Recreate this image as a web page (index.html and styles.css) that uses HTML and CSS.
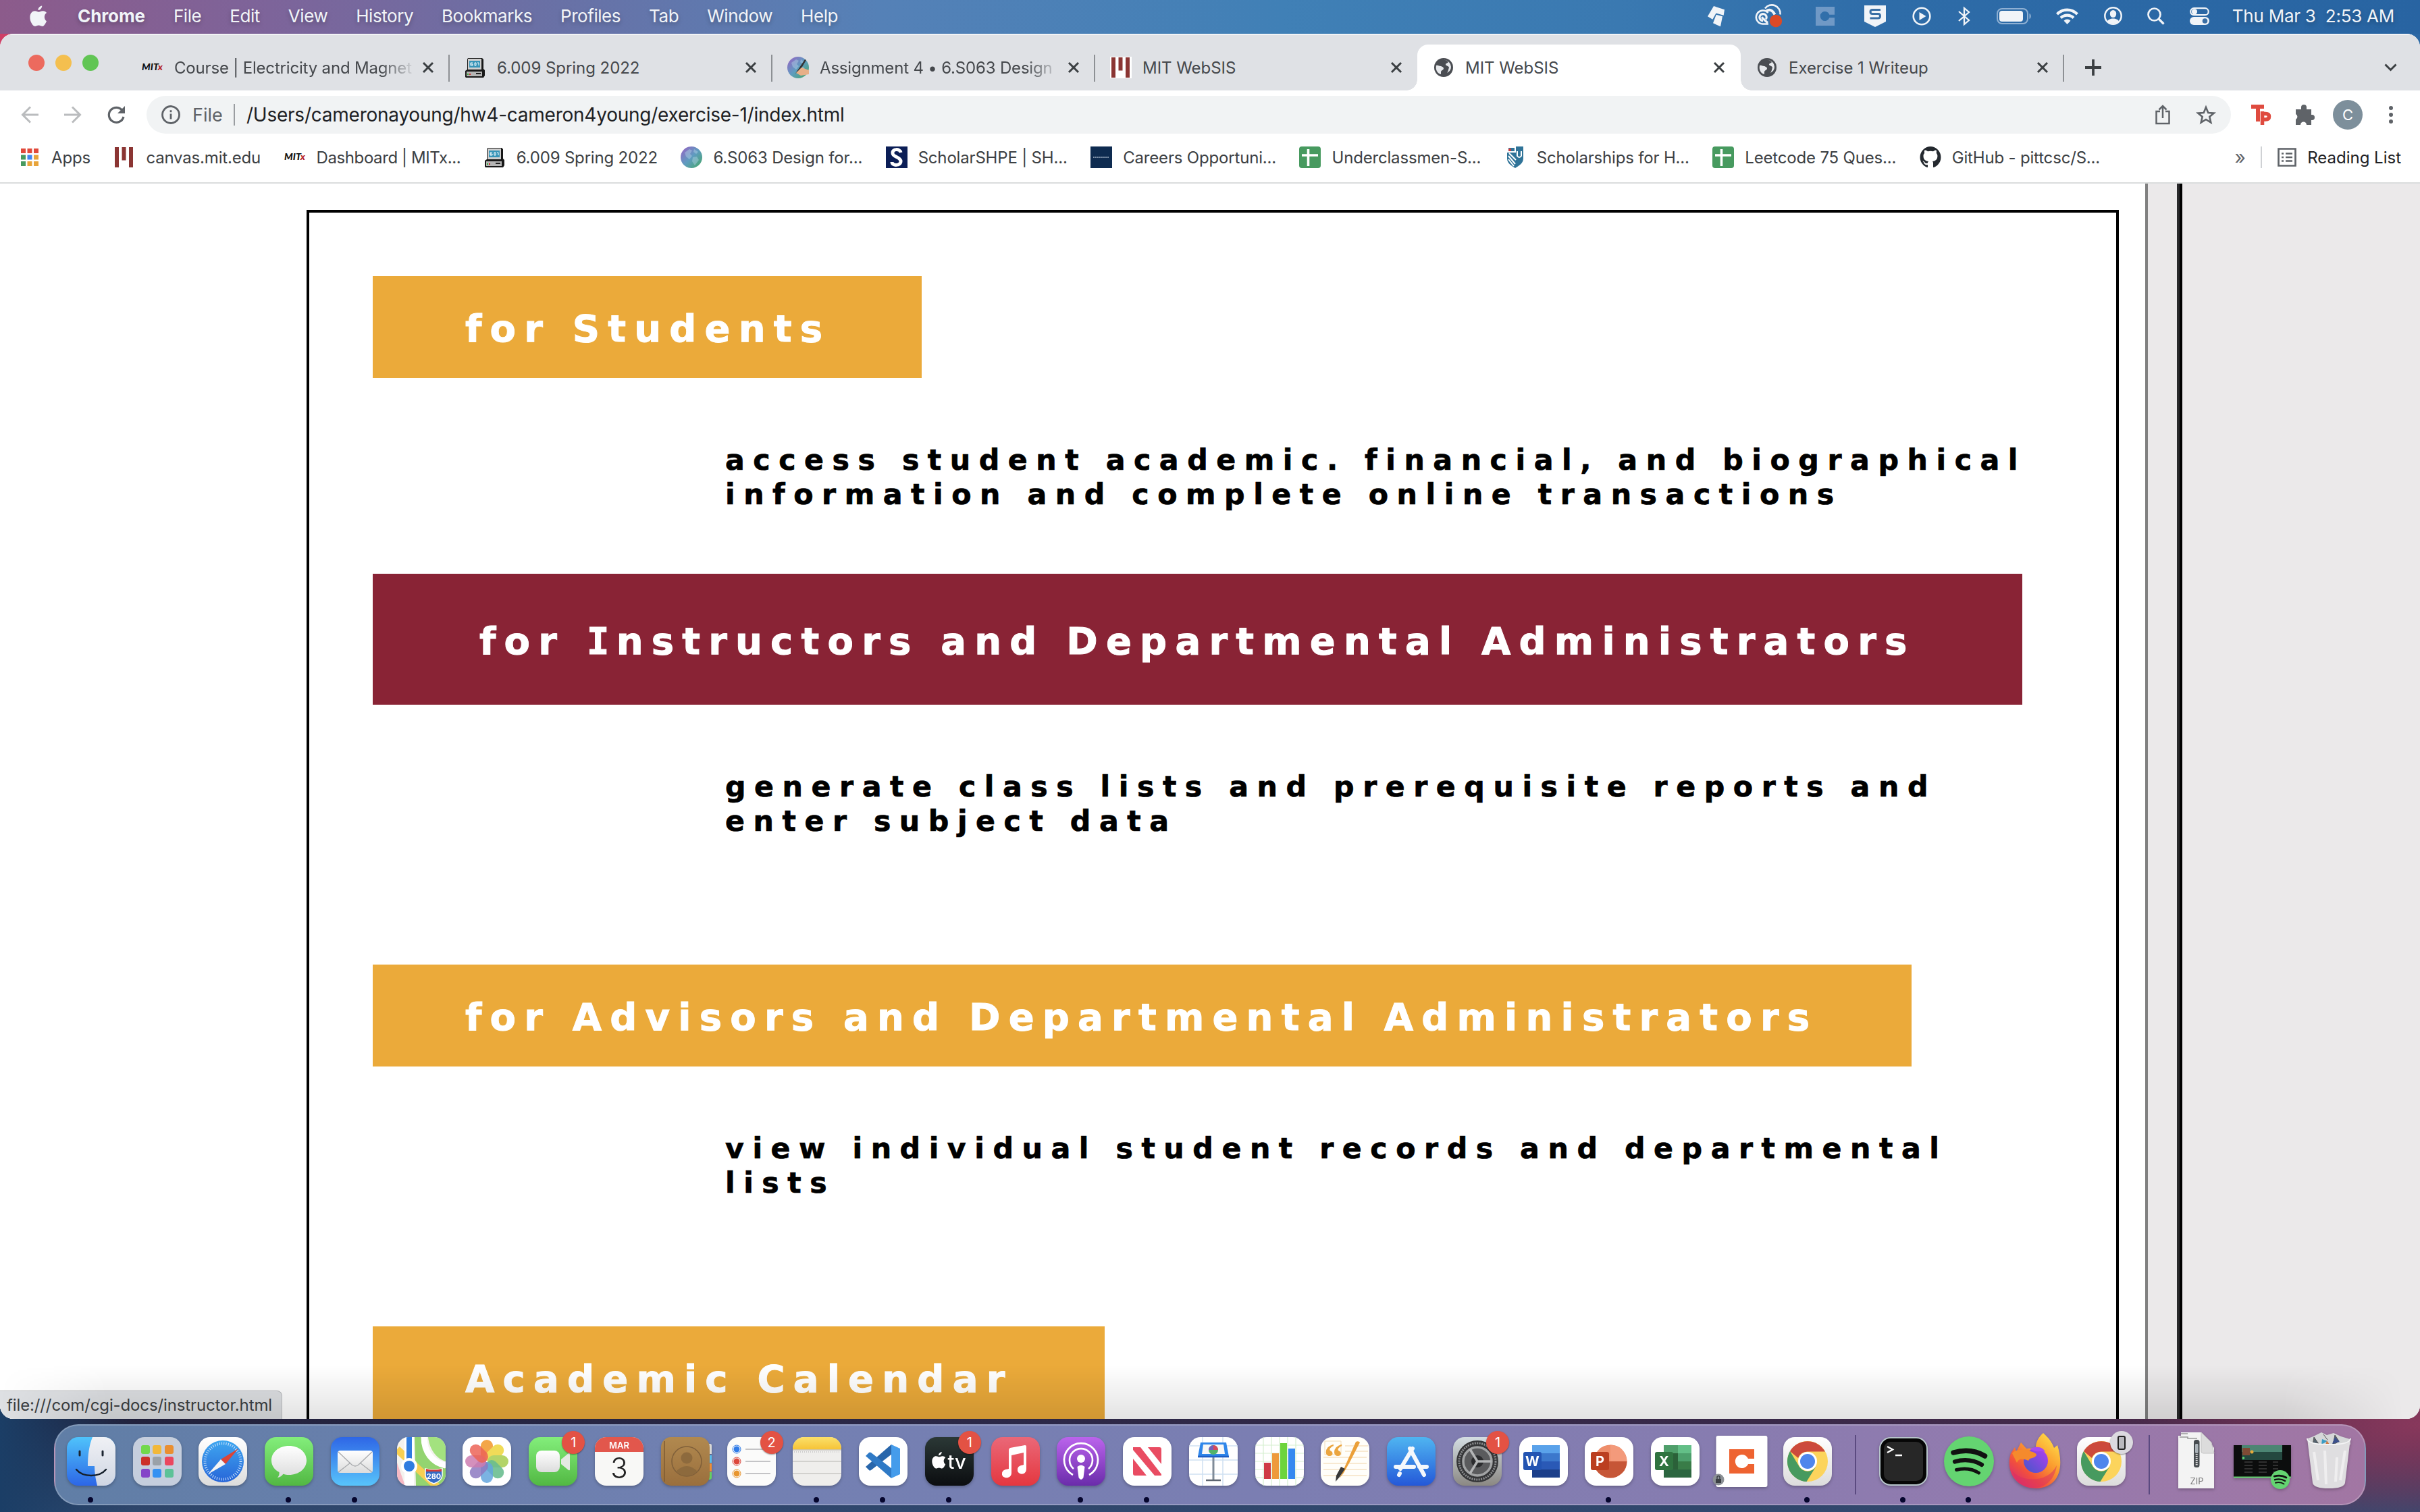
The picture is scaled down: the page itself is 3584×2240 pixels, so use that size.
FILE: index.html
```html
<!DOCTYPE html>
<html lang="en">
<head>
<meta charset="utf-8">
<title>MIT WebSIS</title>
<link rel="stylesheet" href="styles.css">
</head>
<body>
<svg width="0" height="0" class="defs">
  <defs>
    <linearGradient id="g-sky" x2="0" y2="1"><stop stop-color="#4fc3fb"/><stop offset="1" stop-color="#2c66e6"/></linearGradient>
    <linearGradient id="g-face" x2="0" y2="1"><stop stop-color="#f0f1f5"/><stop offset="1" stop-color="#cfd6e3"/></linearGradient>
    <linearGradient id="g-white" x2="0" y2="1"><stop stop-color="#fff"/><stop offset="1" stop-color="#dcdcdc"/></linearGradient>
    <linearGradient id="g-blue" x2="0" y2="1"><stop stop-color="#3fa7f0"/><stop offset="1" stop-color="#2765d8"/></linearGradient>
    <linearGradient id="g-green" x2="0" y2="1"><stop stop-color="#83ee7b"/><stop offset="1" stop-color="#52b843"/></linearGradient>
    <linearGradient id="g-mail" x2="0" y2="1"><stop stop-color="#2e66e6"/><stop offset="1" stop-color="#58c4fb"/></linearGradient>
    <linearGradient id="g-tan" x2="0" y2="1"><stop stop-color="#b1894f"/><stop offset="1" stop-color="#9a6f3d"/></linearGradient>
    <linearGradient id="g-yellow" x2="0" y2="1"><stop stop-color="#fbe06a"/><stop offset="1" stop-color="#f6c235"/></linearGradient>
    <linearGradient id="g-tv" x2="0" y2="1"><stop stop-color="#2b3836"/><stop offset="1" stop-color="#0b0d10"/></linearGradient>
    <linearGradient id="g-music" x2="0" y2="1"><stop stop-color="#ea6878"/><stop offset="1" stop-color="#e5373f"/></linearGradient>
    <linearGradient id="g-pod" x2="0" y2="1"><stop stop-color="#bb64ec"/><stop offset="1" stop-color="#6a2caa"/></linearGradient>
    <linearGradient id="g-store" x2="0" y2="1"><stop stop-color="#4fb5f1"/><stop offset="1" stop-color="#2458d8"/></linearGradient>
    <linearGradient id="g-gear" x2="0" y2="1"><stop stop-color="#d3dde2"/><stop offset="1" stop-color="#8b8883"/></linearGradient>
    <linearGradient id="g-fox" x1="1" x2="0.2" y2="1"><stop stop-color="#fff04f"/><stop offset=".45" stop-color="#fb9a2e"/><stop offset=".75" stop-color="#f2503c"/><stop offset="1" stop-color="#d72a74"/></linearGradient>
    <linearGradient id="g-foxball" x1="1" x2="0" y2="1"><stop stop-color="#b23ef0"/><stop offset="1" stop-color="#4457c8"/></linearGradient>
    <linearGradient id="g-globe" x2="1" y2="1"><stop stop-color="#9a5fc4"/><stop offset=".5" stop-color="#5f9cc0"/><stop offset="1" stop-color="#45a865"/></linearGradient>
    <symbol id="apple" viewBox="0 0 26 32"><path d="M18.2 0.5c.3 2.900-2.600 6.700-5.700 6.500C12.100 4 15.200.8 18.200.5zM25 23.200c-1.300 3.200-3.600 7.600-6.300 7.700-2.100.1-2.900-1.300-5.400-1.300s-3.300 1.300-5.300 1.300C4.500 31 0 23.500.4 17c.3-5.400 3.700-8.700 7.300-8.700 2.300 0 4 1.500 5.700 1.500 1.500 0 3.500-1.700 6.500-1.600 1.900.1 3.900 1 5.100 2.800-4.400 2.800-3.900 9.900 0 12.200z"/></symbol>
    <symbol id="close" viewBox="0 0 18 18"><path d="M2 2l14 14M16 2L2 16" stroke="#3c4043" stroke-width="3" fill="none"/></symbol>
    <symbol id="computer" viewBox="0 0 32 32"><path d="M5 2h21l2 2v14l2 2v8l-2 3H2l-1-1v-9l3-2V4z" fill="#181818"/><path d="M5 3h20v16H5z" fill="#cfcfcf"/><path d="M7 6h16v10H7z" fill="#3794b8"/><path d="M3 22h23v7H3z" fill="#b5b5b5"/><path d="M17 25h7" stroke="#222" stroke-width="2"/><path d="M4 26h2" stroke="#3a3" stroke-width="2"/><path d="M7 26h2" stroke="#c22" stroke-width="2"/><path d="M9 9h3M9 9v4h3v-2h-3M15 9h2v4h-2zM19 9h2v4" stroke="#fff" fill="none"/></symbol>
    <symbol id="bars" viewBox="0 0 28 30"><path d="M0 0h6v30H0zM10.500 0h6v19.500h-6zM21 0h6v30h-6z" fill="#8b3533"/></symbol>
    <symbol id="earth" viewBox="0 0 32 32"><circle cx="16" cy="16" r="16" fill="url(#g-globe)"/><path d="M6 9l7-5 4 2-3 5 3 3-4 5-5-4zM18 16l6-1 3 5-6 8-4-6zM20 4l6 4-3 3-4-3z" fill="#bcd9ea" opacity=".4"/></symbol>
    <symbol id="world" viewBox="0 0 28 28"><circle cx="14" cy="14" r="14" fill="#4a4d52"/><path d="M3 11c3-1 4 1 7 1 2 1 4 1 4 4-1 2-3 2-4 4v4C5.500 23 2.700 19 2.700 14zM12 3c4-1 7 1 9 3-1 2-4 1-4 4 1 2 4 1 5 4-1 3-1 5-3 8 4-2 6-5 6-9l-1-4c-2-4-7-7-12-6z" fill="#e7e9ec"/></symbol>
    <symbol id="sheet" viewBox="0 0 32 32"><rect width="32" height="32" rx="4" fill="#479a5f"/><path d="M4 13h24M13.500 4v25" stroke="#fff" stroke-width="3.600"/></symbol>
    <symbol id="chrome-app" viewBox="0 0 72 72"><rect width="72" height="72" rx="17" fill="url(#g-white)"/><circle cx="36" cy="36" r="30" fill="#fcd45c"/><path d="M10 21A30 30 0 0 1 62 21.500H36A14.500 14.500 0 0 0 22 31z" fill="#cc4a3c"/><path d="M10 21a30 30 0 0 0 24.500 45L48.500 43.500A14.500 14.500 0 0 1 23.500 43.500z" fill="#479a5f"/><circle cx="36" cy="36" r="14" fill="#fff"/><circle cx="36" cy="36" r="11" fill="#4f86ec"/></symbol>
    <symbol id="spotify-mark" viewBox="0 0 74 74"><circle cx="37" cy="37" r="37" fill="#64d471"/><g fill="none" stroke="#111" stroke-linecap="round"><path d="M14 24c16-4.500 33-3 46.500 5" stroke-width="7.500"/><path d="M16 37.500c14-4 28-2.500 40 4.500" stroke-width="6.200"/><path d="M18.500 49.500c12-3 23-1.800 33 4.500" stroke-width="5"/></g></symbol>
  </defs>
</svg>

<header class="menubar">
  <nav class="menus">
    <svg class="apple"><use href="#apple"/></svg>
    <b>Chrome</b><span>File</span><span>Edit</span><span>View</span><span>History</span><span>Bookmarks</span><span>Profiles</span><span>Tab</span><span>Window</span><span>Help</span>
  </nav>
  <div class="tray">
    <svg width="26" height="30" class="t1"><path d="M9 0l16 5.300-1.300 8.400-11.200-3.200-5.200 9.200L0 15.300zM12.700 12.700l9.300 2.600-3 15-11-5z" fill="#f1f4f8"/></svg>
    <svg width="44" height="32" class="t2"><g fill="none" stroke="#f1f4f8"><path d="M20 27.500h-8.500a10 10 0 1 1 8-16.500" stroke-width="2.600"/><path d="M15 4.500a12.500 12.500 0 0 1 22.500 9" stroke-width="2.600"/><path d="M19 26l-9-8.500M16.500 20.500a5.200 5.200 0 1 0-4.500 2.500" stroke-width="3.200"/><path d="M17 8.500q7-5 12.500 5" stroke-width="4"/></g><circle cx="31" cy="23" r="9.200" fill="#dc4a26"/></svg>
    <svg width="28" height="28" class="t3"><path d="M0 0h28v11.700h-7.700a7 7 0 1 0 0 4.600H28V28H0z" fill="#7099c6"/></svg>
    <svg width="32" height="32" class="t4"><path d="M0 0h32v24l-16 8L0 24z" fill="#f1f4f8"/><path d="M24 6.500H12q-3 0-3 3t3 3h8.500q3 0 3 3.200t-3 3.200H8.500" fill="none" stroke="#3a6fa5" stroke-width="3"/></svg>
    <svg width="28" height="28" class="t5"><circle cx="14" cy="14" r="12.300" fill="none" stroke="#f1f4f8" stroke-width="2.600"/><path d="M10.500 8l10 6-10 6z" fill="#f1f4f8"/></svg>
    <svg width="18" height="28" class="t6"><path d="M1 7l15 13-7 6V2l7 6L1 21" fill="none" stroke="#f1f4f8" stroke-width="2.300"/></svg>
    <svg width="52" height="24" class="t7"><rect x="1" y="1" width="45" height="22" rx="7" fill="none" stroke="#8fb0d3" stroke-width="2"/><rect x="4" y="4" width="35" height="16" rx="4" fill="#f1f4f8"/><path d="M48.500 8c3 1 3 7 0 8z" fill="#8fb0d3"/></svg>
    <svg width="33" height="24" class="t8"><g fill="none" stroke="#f1f4f8" stroke-width="4.200"><path d="M1.500 9a21 21 0 0 1 30 0"/><path d="M7 14.500a13.500 13.500 0 0 1 19 0"/></g><path d="M16.500 24l-5-5.300a7 7 0 0 1 10 0z" fill="#f1f4f8"/></svg>
    <svg width="27" height="27" class="t9"><circle cx="13.500" cy="13.500" r="12.200" fill="none" stroke="#f1f4f8" stroke-width="2.500"/><ellipse cx="13.500" cy="10.500" rx="4.700" ry="5.500" fill="#f1f4f8"/><path d="M5 22c1-6 16-6 17 0-4 4-13 4-17 0z" fill="#f1f4f8"/></svg>
    <svg width="26" height="26" class="t10"><circle cx="10.500" cy="10.500" r="9" fill="none" stroke="#f1f4f8" stroke-width="2.700"/><path d="M17 17l7.500 7.500" stroke="#f1f4f8" stroke-width="3.200"/></svg>
    <svg width="29" height="26" class="t11"><rect x="1.200" y="1.200" width="26.500" height="10" rx="5" fill="none" stroke="#f1f4f8" stroke-width="2.200"/><circle cx="7" cy="6.200" r="4" fill="#f1f4f8"/><rect y="14" width="29" height="12" rx="6" fill="#f1f4f8"/><circle cx="22.500" cy="20" r="3.800" fill="#3a6fa5"/></svg>
    <span class="clock">Thu Mar 3&nbsp; 2:53 AM</span>
  </div>
</header>

<main class="window">
  <div class="tabstrip">
    <div class="lights"><i class="red"></i><i class="amber"></i><i class="green"></i></div>
    <div class="tab"><svg class="fav"><text x="0" y="20" class="mitx" textLength="31" lengthAdjust="spacingAndGlyphs">MIT<tspan fill="#b3252c">x</tspan></text></svg><span class="title fade">Course | Electricity and Magnet</span><svg class="x"><use href="#close"/></svg></div>
    <div class="tab"><svg class="fav"><use href="#computer"/></svg><span class="title">6.009 Spring 2022</span><svg class="x"><use href="#close"/></svg></div>
    <div class="tab"><svg class="fav"><use href="#earth"/><path d="M12 25L26 4l2 1-9 15z" fill="#333"/><path d="M13 24l8-8 11 4v6l-12 2z" fill="#e7b088"/></svg><span class="title fade">Assignment 4 • 6.S063 Design</span><svg class="x"><use href="#close"/></svg></div>
    <div class="tab last-before"><svg class="fav"><path d="M0 0h32v32H0z" fill="#fff"/><use href="#bars" x="2" y="1" width="28" height="30"/></svg><span class="title">MIT WebSIS</span><svg class="x"><use href="#close"/></svg></div>
    <div class="tab active"><svg class="fav"><use href="#world" x="2" y="2" width="28" height="28"/></svg><span class="title">MIT WebSIS</span><svg class="x"><use href="#close"/></svg></div>
    <div class="tab"><svg class="fav"><use href="#world" x="2" y="2" width="28" height="28"/></svg><span class="title">Exercise 1 Writeup</span><svg class="x"><use href="#close"/></svg></div>
    <svg class="plus" width="24" height="24"><path d="M12 0v24M0 12h24" stroke="#3c4043" stroke-width="3.800"/></svg>
    <svg class="chevron" width="19" height="12"><path d="M1.500 1.500l8 8 8-8" stroke="#3c4043" stroke-width="3" fill="none"/></svg>
  </div>

  <div class="toolbar">
    <svg width="26" height="26"><path d="M26 13H3M14 1.500L2.500 13 14 24.500" stroke="#babcbe" stroke-width="3" fill="none"/></svg>
    <svg width="26" height="26"><path d="M0 13h23M12 1.500L23.500 13 12 24.500" stroke="#babcbe" stroke-width="3" fill="none"/></svg>
    <svg width="26" height="26"><path d="M22 6.500A11 11 0 1 0 24 16" stroke="#5f6368" stroke-width="3.200" fill="none"/><path d="M26 0v11H15z" fill="#5f6368"/></svg>
    <div class="omnibox">
      <svg width="28" height="28"><circle cx="14" cy="14" r="12.500" stroke="#5f6368" stroke-width="2.800" fill="none"/><path d="M14 12.500v8M14 7.300v3" stroke="#5f6368" stroke-width="2.800"/></svg>
      <span class="scheme">File</span>
      <span class="url">/Users/cameronayoung/hw4-cameron4young/exercise-1/index.html</span>
      <svg class="share" width="22" height="30"><path d="M7 10H1.500v18h19V10H15M11 20V2M5.500 7.500L11 2l5.500 5.500" stroke="#5f6368" stroke-width="2.500" fill="none"/></svg>
      <svg class="star" width="28" height="28"><path d="M14 3l3.300 8 8.500.6-6.500 5.500 2 8.400L14 21l-7.300 4.500 2-8.400-6.500-5.500 8.500-.6z" stroke="#5f6368" stroke-width="2.600" fill="none"/></svg>
    </div>
    <svg class="tp" width="31" height="30"><path d="M0 0h19v6h-6v19H7V6H0z" fill="#df4b3f"/><path d="M16.500 10v20M16.500 13.500h5q5 0 5 4.200t-5 4.200h-4" stroke="#df4b3f" stroke-width="5.500" fill="none"/></svg>
    <svg class="puzzle" width="29" height="30"><path d="M1 7h8V4a4 4 0 0 1 8 0v3h7v8h1a4 4 0 0 1 0 8h-1v7h-7a4.500 4.500 0 0 0-9 0H1v-8a4.500 4.500 0 0 0 0-8z" fill="#5f6368"/></svg>
    <div class="avatar">C</div>
    <svg class="dots" width="6" height="26"><circle cx="3" cy="3" r="3"/><circle cx="3" cy="13" r="3"/><circle cx="3" cy="23" r="3"/></svg>
  </div>

  <div class="bookmarks">
    <a><svg class="fav apps"><path d="M3 3h7v7H3zM12.500 3h7v7h-7z M22 3h7v7h-7z" fill="#e04a3b"/><path d="M3 12.500h7v7H3zM3 22h7v7H3z" fill="#479a5f"/><path d="M12.500 12.500h7v7h-7z" fill="#4285f0"/><path d="M22 12.500h7v7h-7zM12.500 22h7v7h-7zM22 22h7v7h-7z" fill="#e8a43a"/></svg>Apps</a>
    <a><svg class="fav"><use href="#bars" x="2" y="1" width="28" height="30"/></svg>canvas.mit.edu</a>
    <a class="tight"><svg class="fav"><text x="0" y="20" class="mitx" textLength="31" lengthAdjust="spacingAndGlyphs">MIT<tspan fill="#b3252c">x</tspan></text></svg>Dashboard | MITx...</a>
    <a><svg class="fav"><use href="#computer"/></svg>6.009 Spring 2022</a>
    <a><svg class="fav"><use href="#earth"/></svg>6.S063 Design for...</a>
    <a><svg class="fav"><path d="M0 0h32v32H0z" fill="#0b1e56"/><path d="M22 9c-1-6-13-6-12 1 0 6 12 5 12 12 0 7-13 7-13 1" fill="none" stroke="#fff" stroke-width="5"/></svg>ScholarSHPE | SH...</a>
    <a><svg class="fav"><path d="M0 0h32v32H0z" fill="#0e2b50"/><path d="M4 16h24" stroke="#8496ad" stroke-width="2" stroke-dasharray="2 1"/></svg>Careers Opportuni...</a>
    <a><svg class="fav"><use href="#sheet"/></svg>Underclassmen-S...</a>
    <a><svg class="fav"><path d="M4 0h24v18c0 7-7 11-12 14C11 29 4 25 4 18z" fill="#2f7398"/><path d="M5 1h11v7H5zM6 14l10 12M6 19l8 10M7 10l10 10M19 7v7q3 4 6 0V7" stroke="#fff" stroke-width="2" fill="none"/><circle cx="8" cy="5" r="2" fill="#d33"/></svg>Scholarships for H...</a>
    <a><svg class="fav"><use href="#sheet"/></svg>Leetcode 75 Ques...</a>
    <a><svg class="fav"><path d="M16 0a16 16 0 0 0-5 31c1 0 1-.5 1-1v-3c-5 1-5.500-2.500-5.500-2.500C5.500 22 4 21.500 4 21.500c2-.5 3 1.500 3.500 2 1.500 2 3.500 1.500 4.500 1 0-1 .5-2 1-2.500-4-.5-7.500-2-7.500-8 0-2 .7-3 1.700-4.200-.2-.8-.6-2 .2-4.300 0 0 1.500-.4 4.600 1.700a16 16 0 0 1 8 0c3-2 4.500-1.700 4.500-1.700.8 2.300.4 3.500.2 4.300 1 1.200 1.700 2.500 1.700 4.200 0 6-3.500 7.500-7.400 8 .6.500 1 1.500 1 3v5c0 .5 0 1 1 1A16 16 0 0 0 16 0z" fill="#24292f"/></svg>GitHub - pittcsc/S...</a>
    <span class="more">»</span>
    <a class="reading"><svg width="28" height="28"><path d="M1.500 1.500h25v25h-25zM6 8.500h3M6 14h3M6 19.500h3M12 8.500h10M12 14h10M12 19.500h10" stroke="#5f6368" stroke-width="2.700" fill="none"/></svg>Reading List</a>
  </div>

  <div class="page">
    <section class="content">
      <div class="panel">
        <h2 class="students">for Students</h2>
        <p>access student academic. financial, and biographical<br>information and complete online transactions</p>
        <h2 class="instructors">for <span class="slab">I</span>nstructors and Departmental Administrators</h2>
        <p class="roomy">generate class lists and prerequisite reports and<br>enter subject data</p>
        <h2 class="advisors">for Advisors and Departmental Administrators</h2>
        <p class="roomy">view individual student records and departmental<br>lists</p>
        <h2 class="calendar">Academic Calendar</h2>
      </div>
    </section>
    <div class="rail"></div>
    <div class="status">file:///com/cgi-docs/instructor.html</div>
  </div>
</main>

<footer class="dock">
  <div class="app on"><svg viewBox="0 0 72 72"><clipPath id="sq"><rect width="72" height="72" rx="17"/></clipPath><g clip-path="url(#sq)"><path d="M0 0h72v72H0z" fill="url(#g-sky)"/><path d="M38 0h34v72H45c-2-8-4-18-4-29H31C31 27 33 12 38 0z" fill="url(#g-face)"/></g><path d="M19 21v6M53 21v6" stroke="#1c2430" stroke-width="3" stroke-linecap="round"/><path d="M14 48c10 12 34 12 44 0" fill="none" stroke="#16202c" stroke-width="2.500" stroke-linecap="round"/></svg></div>
  <div class="app"><svg viewBox="0 0 72 72"><rect width="72" height="72" rx="17" fill="#c5cedd"/><g><rect x="12" y="12" width="13" height="13" rx="3" fill="#72d84c"/><rect x="29" y="12" width="13" height="13" rx="3" fill="#f2b83a"/><rect x="47" y="12" width="13" height="13" rx="3" fill="#ea8f31"/><rect x="12" y="29" width="13" height="13" rx="3" fill="#cc3029"/><rect x="29" y="29" width="13" height="13" rx="3" fill="#9aa1a8"/><rect x="47" y="29" width="13" height="13" rx="3" fill="#ea475f"/><rect x="12" y="47" width="13" height="13" rx="3" fill="#8545c8"/><rect x="29" y="47" width="13" height="13" rx="3" fill="#3592f2"/><rect x="47" y="47" width="13" height="13" rx="3" fill="#5cc298"/></g></svg></div>
  <div class="app"><svg viewBox="0 0 72 72"><rect width="72" height="72" rx="17" fill="url(#g-white)"/><circle cx="36" cy="36" r="31" fill="url(#g-blue)"/><circle cx="36" cy="36" r="26.500" fill="none" stroke="#cfe4fb" stroke-width="4" stroke-dasharray="1 2.300"/><path d="M59 17L40 40l-7-7z" fill="#dc4437"/><path d="M14 55l19-22 7 7z" fill="#f4f4f4"/></svg></div>
  <div class="app on"><svg viewBox="0 0 72 72"><rect width="72" height="72" rx="17" fill="url(#g-green)"/><path d="M36 13c15 0 26 9.500 26 21.500S51 56 36 56c-3 0-6-.4-8.600-1.200C25 58 22 60 19 60c2-2 3-5 2.500-8C14 48 10 42 10 34.500 10 22.500 21 13 36 13z" fill="url(#g-white)"/></svg></div>
  <div class="app on"><svg viewBox="0 0 72 72"><rect width="72" height="72" rx="17" fill="url(#g-mail)"/><rect x="10" y="20" width="52" height="33" rx="4" fill="url(#g-white)"/><path d="M11 22l20 19q5 4 10 0l20-19M11 52l18-14M61 52L43 38" fill="none" stroke="#a7a9ac" stroke-width="1.300"/></svg></div>
  <div class="app"><svg viewBox="0 0 72 72"><g clip-path="url(#sq)"><path d="M0 0h72v72H0z" fill="#f4f2ee"/><path d="M46 0h26v36C58 32 48 18 46 0z" fill="#a3e27f"/><path d="M26 0h10c1 22 12 42 36 46v26H28z" fill="#93d470"/><path d="M40 0c0 22 12 38 32 42" fill="none" stroke="#fff" stroke-width="9"/><path d="M0 18l60 56" stroke="#f7cf52" stroke-width="11"/><path d="M0 38l12 34H0z" fill="#f5b9c4"/><path d="M18 0v40M18 52v20" stroke="#fff" stroke-width="14"/><path d="M18 0v36" stroke="#2f7ce0" stroke-width="8"/></g><circle cx="18" cy="43" r="12" fill="#fff"/><circle cx="18" cy="43" r="8" fill="#2f7ce0"/><path d="M42 47q12 3 25 0v10q-1 8-12.500 12Q43 65 42 57z" fill="#356cc4" stroke="#fff" stroke-width="1.500"/><path d="M43 47q11 3 23 0v4H43z" fill="#d23c37"/><text x="54.500" y="61.500" class="route">280</text></svg></div>
  <div class="app"><svg viewBox="0 0 72 72"><rect width="72" height="72" rx="17" fill="#fff"/><g transform="translate(36 36)" opacity=".88"><rect x="-9" y="-32" width="18" height="31" rx="9" fill="#f29a31"/><rect x="-9" y="-32" width="18" height="31" rx="9" fill="#efd742" transform="rotate(45)"/><rect x="-9" y="-32" width="18" height="31" rx="9" fill="#a9cf55" transform="rotate(90)"/><rect x="-9" y="-32" width="18" height="31" rx="9" fill="#55b481" transform="rotate(135)" opacity=".9"/><rect x="-9" y="-32" width="18" height="31" rx="9" fill="#4f9ad8" transform="rotate(180)" opacity=".85"/><rect x="-9" y="-32" width="18" height="31" rx="9" fill="#7e69b8" transform="rotate(225)" opacity=".85"/><rect x="-9" y="-32" width="18" height="31" rx="9" fill="#c66ba6" transform="rotate(270)" opacity=".85"/><rect x="-9" y="-32" width="18" height="31" rx="9" fill="#ea4f3f" transform="rotate(315)" opacity=".85"/></g></svg></div>
  <div class="app"><svg viewBox="0 0 72 72"><rect width="72" height="72" rx="17" fill="url(#g-green)"/><rect x="11" y="20" width="35" height="32" rx="8" fill="url(#g-white)"/><path d="M48 33l11-9q2-1 2 1v23q0 2-2 1l-11-9z" fill="#e4e9e2"/></svg><em class="badge">1</em></div>
  <div class="app"><svg viewBox="0 0 72 72"><rect width="72" height="72" rx="17" fill="#f8f8f6"/><path d="M0 22v-5A17 17 0 0 1 17 0h38a17 17 0 0 1 17 17v5z" fill="#e2574c"/><text x="36" y="16.500" class="cal-month">MAR</text><text x="36" y="61" class="cal-day">3</text></svg></div>
  <div class="app"><svg viewBox="0 0 72 72"><path d="M68 10h5q2 0 2 3v12h-7z" fill="#d8d8d6"/><path d="M68 27h7v11h-7z" fill="#58bbea"/><path d="M68 39h7v12h-7z" fill="#ef8d34"/><path d="M68 52h7v8q0 3-3 3h-4z" fill="#65cf62"/><rect width="72" height="72" rx="15" fill="url(#g-tan)"/><path d="M5 6v60" stroke="#7e5b33" stroke-width="1.500"/><circle cx="38" cy="36" r="22" fill="none" stroke="#80603a" stroke-width="1.600"/><circle cx="38" cy="31" r="8.500" fill="#8d6a3d"/><path d="M22 51q16-16 32 0-16 13-32 0z" fill="#8d6a3d"/></svg></div>
  <div class="app"><svg viewBox="0 0 72 72"><rect width="72" height="72" rx="17" fill="#fbfbfa"/><path d="M27 18h37M27 36h37M27 54h37" stroke="#c4c4c6" stroke-width="1.800"/><circle cx="14" cy="18" r="5" fill="#2f7be8" stroke="#fff"/><circle cx="14" cy="18" r="6" fill="none" stroke="#2f7be8"/><circle cx="14" cy="36" r="4.500" fill="#dd473b"/><circle cx="14" cy="36" r="6" fill="none" stroke="#dd473b"/><circle cx="14" cy="54" r="4.500" fill="#e8962f"/><circle cx="14" cy="54" r="6" fill="none" stroke="#e8962f"/></svg><em class="badge">2</em></div>
  <div class="app on"><svg viewBox="0 0 72 72"><rect width="72" height="72" rx="17" fill="#efeeec"/><path d="M0 19v-2A17 17 0 0 1 17 0h38a17 17 0 0 1 17 17v2z" fill="url(#g-yellow)"/><path d="M0 19h72M0 36h72M0 54h72" stroke="#c9c7c4" stroke-width="1.300"/><path d="M2 22h68" stroke="#aaa" stroke-dasharray="1 2"/></svg></div>
  <div class="app on"><svg viewBox="0 0 72 72"><rect width="72" height="72" rx="17" fill="#fff"/><path d="M48 11L10 44l5 5q1 1 3 0l31-24z" fill="#2866ab"/><path d="M48 61L10 28l5-5q1-1 3 0l31 24z" fill="#2f7ac6"/><path d="M48 11l13 6v38l-13 6z" fill="#459ceb"/></svg></div>
  <div class="app on"><svg viewBox="0 0 72 72"><rect width="72" height="72" rx="17" fill="url(#g-tv)"/><use href="#apple" x="10" y="21" width="21" height="27" fill="#fff"/><text x="47" y="47" class="tv">tv</text></svg><em class="badge">1</em></div>
  <div class="app"><svg viewBox="0 0 72 72"><rect width="72" height="72" rx="17" fill="url(#g-music)"/><path d="M26 19q0-2 2-3l22-4q2 0 2 2v33c0 11-14 9-13 1 0-5 5-6 9-7V23l-18 4v26c0 10-15 9-14 1 0-5 5-6 10-7z" fill="#fff"/></svg></div>
  <div class="app on"><svg viewBox="0 0 72 72"><rect width="72" height="72" rx="17" fill="url(#g-pod)"/><g fill="none" stroke="#fff" stroke-width="2.700"><path d="M24 56a25 25 0 1 1 24 0"/><path d="M25 47a17 17 0 1 1 22 0"/></g><circle cx="36" cy="32" r="6" fill="#fff"/><path d="M30.500 44q5.500-5 11 0l-2 16q-3.500 6-7 0z" fill="#fff"/></svg></div>
  <div class="app on"><svg viewBox="0 0 72 72"><rect width="72" height="72" rx="17" fill="#fff"/><path d="M15 15h11l31 40v2H47L15 19z" fill="#e94c62"/><path d="M37 15h17q3 0 3 3v22zM15 32l20 25H18q-3 0-3-3z" fill="#e94c62"/></svg></div>
  <div class="app"><svg viewBox="0 0 72 72"><rect width="72" height="72" rx="17" fill="#fff"/><path d="M0 13h72M0 34h72M0 55h72M20 0v72M50 0v72" stroke="#cfe1f2" stroke-width="1.500"/><path d="M36 28v36" stroke="#7f8b98" stroke-width="3"/><path d="M17 8h38l4 21H13z" fill="#2f86ea"/><path d="M21 11h30l2 14H19z" fill="#f7f7f7"/><circle cx="36" cy="19" r="7" fill="#52b36a"/><path d="M36 19v-7a7 7 0 0 1 7 7z" fill="#d9485c"/><path d="M36 19h-7a7 7 0 0 1 7-7z" fill="#7660b8"/><path d="M13 29h46" stroke="#1d5dc4" stroke-width="2.500"/><path d="M25 64h22" stroke="#5e6570" stroke-width="2.500"/></svg></div>
  <div class="app"><svg viewBox="0 0 72 72"><rect width="72" height="72" rx="17" fill="#fff"/><path d="M0 12h72M0 24h72M0 36h72M0 48h72M0 60h72M12 0v72M24 0v72M36 0v72M48 0v72M60 0v72" stroke="#d5efd0" stroke-width="1.200"/><path d="M13 38h10v24H13z" fill="#cf3a45"/><path d="M25 24h10v38H25z" fill="#ee9a3b"/><path d="M37 9h10v53H37z" fill="#6dd43c"/><path d="M49 17h10v45H49z" fill="#3689f0"/></svg></div>
  <div class="app"><svg viewBox="0 0 72 72"><rect width="72" height="72" rx="17" fill="#fffefa"/><path d="M4 30h64M4 39h64M4 48h64M4 57h64M36 13h34M36 21h34" stroke="#f6e2c4" stroke-width="1.300"/><path d="M6 6h24v20H6z" fill="none" stroke="#f0dcb8"/><text x="5" y="49" class="quote">“</text><path d="M52 7q4-2 6 1L43 37l-9 16-6 8z" fill="#eba03a"/><path d="M30 44l6 3-8 12-6 7 1-9z" fill="#383838"/></svg></div>
  <div class="app"><svg viewBox="0 0 72 72"><rect width="72" height="72" rx="17" fill="url(#g-store)"/><g stroke="#f4f8fc" stroke-width="6" stroke-linecap="round"><path d="M38 17L20 47M34 17l21 39M13 44h27M48 44h11M19 54l-1 2"/></g></svg></div>
  <div class="app"><svg viewBox="0 0 72 72"><rect width="72" height="72" rx="17" fill="url(#g-gear)"/><circle cx="36" cy="36" r="31" fill="#353638"/><circle cx="36" cy="36" r="27" fill="none" stroke="#8c8e90" stroke-width="3" stroke-dasharray="2 1.500"/><circle cx="36" cy="36" r="21" fill="#5a5b5d" stroke="#a1a3a4" stroke-width="3.500"/><circle cx="36" cy="36" r="9" fill="#2b2c2e"/><path d="M36 36h21M36 36L25 18M36 36L25 54" stroke="#b3b5b6" stroke-width="3.500"/></svg><em class="badge">1</em></div>
  <div class="app"><svg viewBox="0 0 72 72"><rect width="72" height="72" rx="17" fill="#fff"/><path d="M19 12h41v12H19z" fill="#5aa2ea"/><path d="M19 24h41v12H19z" fill="#3c78cc"/><path d="M19 36h41v12H19z" fill="#2a59b6"/><path d="M19 48h41v12H19z" fill="#1c3f8a"/><rect x="6" y="22" width="27" height="27" rx="3" fill="#2354b2"/><text x="19.500" y="42.500" class="office">W</text></svg></div>
  <div class="app on"><svg viewBox="0 0 72 72"><rect width="72" height="72" rx="17" fill="#fff"/><circle cx="38" cy="36" r="24.500" fill="#ee8e6b"/><path d="M38 11.500A24.500 24.500 0 0 1 62.500 36H38z" fill="#f39a7b"/><path d="M13.500 36a24.500 24.500 0 0 0 49 0z" fill="#c65637"/><rect x="9" y="22" width="27" height="27" rx="3" fill="#bb3f20"/><text x="22.500" y="42.500" class="office">P</text></svg></div>
  <div class="app"><svg viewBox="0 0 72 72"><rect width="72" height="72" rx="17" fill="#fff"/><path d="M19 12h41v48H19z" fill="#2c6640"/><path d="M19 12h21v12H19z" fill="#4f9f6b"/><path d="M40 12h20v12H40z" fill="#63bf87"/><path d="M40 24h20v12H40z" fill="#4c9f6b"/><path d="M19 24h21v24H19z" fill="#2b6139"/><path d="M40 36h20v12H40z" fill="#397c48"/><rect x="6" y="22" width="27" height="27" rx="3" fill="#2f7340"/><text x="19.500" y="42.500" class="office">X</text></svg></div>
  <div class="app"><svg viewBox="0 0 72 72"><rect x="-1.500" y="-2" width="76" height="76" rx="3" fill="#fff"/><path d="M18 18h37v14h-9a10 10 0 1 0 0 8h9v14H18z" fill="#ee6331"/><circle cx="2" cy="63" r="8.500" fill="#8b9095"/><path d="M-2 62h8v6h-8z" fill="#3b3f44"/><path d="M0 62v-3q2-3 4 0v3" fill="none" stroke="#3b3f44" stroke-width="1.500"/></svg></div>
  <div class="app on"><svg viewBox="0 0 72 72"><use href="#chrome-app"/></svg></div>
  <div class="rule"></div>
  <div class="app on"><svg viewBox="0 0 72 72"><rect width="72" height="72" rx="17" fill="#b7c5ca"/><rect x="2" y="2" width="68" height="68" rx="15" fill="#060606"/><rect x="7" y="7" width="58" height="58" rx="10" fill="#272727"/><path d="M12 14l8 4.500-8 4.500M24 27h10" stroke="#fff" stroke-width="2.400" fill="none"/></svg></div>
  <div class="app on"><svg viewBox="0 0 72 72"><use href="#spotify-mark" x="-1" y="-1" width="74" height="74"/></svg></div>
  <div class="app"><svg viewBox="0 0 72 72"><path d="M48-6c9 8 13 14 16 22l5-4c9 28 6 62-31 64C6 76-8 50 0 24l6-9 2 7 7-14 8 9c6 0 9-1 14-1 0-9 4-16 11-22z" fill="url(#g-fox)"/><circle cx="37" cy="35" r="18" fill="url(#g-foxball)"/><path d="M2 24c5-6 12-4 16-6 6-1 10 0 11 3 6 2 9 3 9 6-4 6-9 2-12 8-10-4-14-3-17 3z" fill="#f58a2c"/><path d="M28 18c10-6 20-3 23 4-6-2-8 0-14-1z" fill="#a94af0"/><path d="M2 50c12 16 52 20 66-8-3 20-15 33-34 33C18 75 6 64 2 50z" fill="#d92d63" opacity=".5"/></svg></div>
  <div class="app"><svg viewBox="0 0 72 72"><use href="#chrome-app"/></svg><em class="badge device"><i></i></em></div>
  <div class="rule"></div>
  <div class="app"><svg viewBox="0 0 72 72"><path d="M12-7h30l19 23v60H8V-2h4z" fill="#f3f3f3"/><path d="M42-7l15 15 4 16H45q-3 0-3-3z" fill="#dcdcdc" stroke="#c4c4c4"/><path d="M12-5h10M10 0h12v2h14" stroke="#999" stroke-width="1.600" fill="none"/><rect x="31" y="4" width="8.500" height="41" rx="3.500" fill="#474c50"/><path d="M35.200 10v32" stroke="#ddd" stroke-width="3" stroke-dasharray="1.500 1.500"/><rect x="33" y="10" width="4.500" height="14" rx="2" fill="#aab2b8"/><text x="35.500" y="70" class="zip">ZIP</text></svg></div>
  <div class="app"><svg viewBox="0 0 72 72"><path d="M-7 12h85v48H-7z" fill="#0c0d0d"/><path d="M5 12h60v22H5z" fill="#4c8573"/><path d="M5 22h60v12H5z" fill="#24483f"/><path d="M6 16h11v11H6z" fill="#7f4b35"/><circle cx="20" cy="22" r="2.500" fill="#e6a83a"/><circle cx="7.500" cy="31" r="1.800" fill="#64d471"/><path d="M9 37h50M9 42h50M9 47h50M9 52h50" stroke="#555" stroke-dasharray="12 9"/><path d="M-7 59.500h85" stroke="#64d471" stroke-width="2"/><use href="#spotify-mark" x="48" y="49" width="28" height="28"/></svg></div>
  <div class="app"><svg viewBox="0 0 72 72"><path d="M5 2l8-3 12-6 8 4 10-3 11 5 13 4 1 8H7z" fill="#d5d7d8"/><path d="M14 0l7 10-9 2zM45-3l6 9-9 6zM28-4l6 8" fill="#55636e" stroke="#555"/><path d="M26 3l8 3-9 5z" fill="#3c9cc4"/><path d="M45 0l7 7-11 3z" fill="#3b4f8c"/><path d="M33 5l4 6-6 1z" fill="#cf7a44"/><path d="M4 2q0 9 32 9T68 2l-8 66q-2 8-24 8t-24-8z" fill="#dfdee0"/><path d="M4 2q0 9 32 9T68 2" fill="none" stroke="#f3f3f4" stroke-width="2"/><path d="M14 22l6 42M30 20l2 50M48 30l-2 36M60 20l-7 44" stroke="#fafafa" stroke-width="4" opacity=".6"/></svg></div>
</footer>
</body>
</html>
```
FILE: styles.css
```css
* { box-sizing: border-box; }
body {
  margin: 0;
  width: 3584px;
  height: 2240px;
  overflow: hidden;
  font-family: Inter, "Liberation Sans", sans-serif;
  background:
    linear-gradient(90deg, #cf3f66 0 680px, #5b9ccd 690px, #2c68a5 100%) 0 0 / 100% 120px no-repeat,
    radial-gradient(ellipse 420px 160px at 100% 2110px, #88385c 0, rgba(136, 56, 92, 0) 100%),
    linear-gradient(90deg, #1b3e66 0, rgba(27, 62, 102, 0) 200px),
    linear-gradient(180deg, transparent 2102px, rgba(48, 76, 115, .9) 2240px),
    linear-gradient(90deg, #20203a 0, #2b2746 40%, #3a2848 75%, #54294a 100%);
}
.defs { position: absolute; }
svg { flex: none; display: block; overflow: visible; }

/* menu bar */
.menubar {
  height: 50px;
  display: flex;
  justify-content: space-between;
  align-items: center;
  padding: 0 38px 3px 44px;
  color: #f1f4f8;
  font-size: 26px;
  letter-spacing: -.25px;
  text-shadow: 0 3px 6px rgba(0, 0, 0, .25);
  background: linear-gradient(90deg, #8c5b8b 0, #7d649a 400px, #6a70a5 800px, #5581b7 1300px, #4080b6 1900px, #3a79b1 2400px, #2e6ca8 2800px, #2864a2 100%);
}
.menus { display: flex; align-items: center; gap: 42px; letter-spacing: -.45px; }
.apple { width: 26px; height: 32px; fill: #f1f4f8; }
.menus b { font-weight: 700; letter-spacing: -.1px; }
.menus .apple + b { margin-left: 3px; }
.tray { display: flex; align-items: center; }
.t1 { margin-right: 44px; }
.t2 { margin-right: 46px; }
.t3 { margin-right: 44px; }
.t4 { margin-right: 39px; }
.t5 { margin-right: 40px; }
.t6 { margin-right: 39px; }
.t7 { margin-right: 36px; }
.t8 { margin-right: 38px; }
.t9 { margin-right: 37px; }
.t10 { margin-right: 37px; }
.t11 { margin-right: 34px; }

/* browser window */
.window {
  height: 2052px;
  border-radius: 20px;
  overflow: hidden;
  background: #fff;
  display: flex;
  flex-direction: column;
}
.tabstrip {
  height: 84px;
  display: flex;
  align-items: flex-end;
  background: #dfe1e5;
  border-top: 2px solid #f2f3f5;
}
.lights { width: 187px; height: 68px; padding: 15px 0 0 42px; display: flex; gap: 16px; }
.lights i { width: 24px; height: 24px; border-radius: 50%; }
.red { background: #ec6a5e; }
.amber { background: #f4bf4f; }
.green { background: #61c554; }
.tab {
  width: 478px;
  height: 68px;
  padding: 0 0 0 23px;
  display: flex;
  align-items: center;
  position: relative;
  font-size: 24px;
  letter-spacing: -.05px;
  color: #45484c;
}
.tab::after {
  content: "";
  position: absolute;
  right: -1px;
  top: 15px;
  width: 2px;
  height: 40px;
  background: #8d9094;
}
.tab.last-before::after, .tab.active::after { display: none; }
.fav { width: 32px; height: 32px; flex: none; }
.mitx { font: italic 900 13px Lato, sans-serif; letter-spacing: 0; fill: #111; }
.tab .title {
  margin-left: 16px;
  width: 358px;
  white-space: nowrap;
}
.tab .fade {
  letter-spacing: -.18px;
  -webkit-mask-image: linear-gradient(90deg, #000 305px, transparent 358px);
  mask-image: linear-gradient(90deg, #000 305px, transparent 358px);
}
.tab .x { width: 18px; height: 18px; margin-left: 9px; }
.tab.active {
  background: #fff;
  border-radius: 16px 16px 0 0;
  width: 479px;
}
.tab.active::before, .tab.active::after {
  content: "";
  display: block;
  position: absolute;
  bottom: 0;
  top: auto;
  width: 16px;
  height: 16px;
}
.tab.active::before { left: -16px; background: radial-gradient(circle at 0 0, transparent 15.500px, #fff 16px); }
.tab.active::after { right: -16px; background: radial-gradient(circle at 100% 0, transparent 15.500px, #fff 16px); }
.plus { margin: 0 0 22px 32px; }
.chevron { margin: 0 34px 28px auto; }

.toolbar { height: 72px; display: flex; align-items: center; padding: 0 40px 0 31px; }
.toolbar > svg { margin-right: 38px; }
.toolbar > svg:nth-child(3) { margin-right: 32px; }
.omnibox {
  width: 3087px;
  height: 56px;
  border-radius: 28px;
  background: #f1f3f4;
  display: flex;
  align-items: center;
  padding: 0 23px 0 22px;
  font-size: 28px;
}
.scheme { margin-left: 18px; width: 62px; color: #5f6368; font-size: 27px; position: relative; }
.scheme::after { content: ""; position: absolute; right: -1px; top: 0; width: 2px; height: 32px; background: #9a9da1; }
.url { margin-left: 18px; color: #202124; white-space: nowrap; letter-spacing: -.24px; }
.share { margin-left: auto; }
.star { margin-left: 39px; }
.toolbar > .tp { margin: 0 34px 0 30px; }
.toolbar > .puzzle { margin: 0 27px 0 0; }
.avatar { width: 44px; height: 44px; border-radius: 50%; background: #7d8f9b; color: #fff; font-size: 22px; display: grid; place-items: center; }
.toolbar > .dots { margin: 0 0 0 39px; fill: #5f6368; }

.bookmarks {
  height: 66px;
  padding: 0 28px 10px 28px;
  display: flex;
  align-items: center;
  gap: 34.500px;
  font-size: 24px;
  letter-spacing: -.18px;
  color: #3c4043;
  border-bottom: 2px solid #dadcdd;
  white-space: nowrap;
}
.bookmarks a { display: flex; align-items: center; gap: 16px; }
.bookmarks .tight { letter-spacing: -.4px; }
.more { margin-left: auto; font-size: 28px; color: #5f6368; }
.bookmarks .reading { border-left: 2px solid #cfd1d4; padding-left: 23px; margin-left: -12px; height: 32px; color: #202124; letter-spacing: 0; }

/* web page */
.page { flex: 1; min-height: 0; display: flex; position: relative; background: #ebe9ea; overflow: hidden; }
.page::after {
  content: "";
  position: absolute;
  inset: auto 0 0 0;
  height: 80px;
  background: linear-gradient(rgba(0, 0, 0, 0), rgba(0, 0, 0, .11));
  -webkit-mask-image: linear-gradient(90deg, transparent 0, #000 160px, #000 3380px, transparent 3560px);
  mask-image: linear-gradient(90deg, transparent 0, #000 160px, #000 3380px, transparent 3560px);
}
.content { width: 3181px; border-right: 4px solid #808080; background: #fff; padding: 39px 0 0 454px; overflow: hidden; }
.rail { width: 51px; border-right: 4px solid #000; box-shadow: inset -4px 0 0 #2a2a2c; }
.panel {
  width: 2684px;
  height: 2400px;
  border: 4px solid #000;
  padding: 94px 0 0 94px;
  font-family: Verdana, "DejaVu Sans", sans-serif;
  font-weight: 700;
}
.panel h2 {
  margin: 0 0 97px;
  height: 151px;
  padding-left: 137px;
  line-height: 156px;
  font-size: 56px;
  letter-spacing: 12.200px;
  color: #fff;
  -webkit-text-stroke: 1px #fff;
  background: #ebaa3a;
  white-space: nowrap;
}
.panel .students { width: 813px; }
.panel .instructors { width: 2443px; height: 194px; line-height: 200px; padding-left: 158px; background: #892335; }
.panel .slab { font-family: "DejaVu Sans Mono", monospace; line-height: 1; margin-right: -2px; }
.panel .advisors { width: 2279px; }
.panel .calendar { width: 1084px; }
.panel p {
  margin: -1px 0 92px 522px;
  font-size: 42.700px;
  line-height: 51px;
  letter-spacing: 12.550px;
  color: #000;
  -webkit-text-stroke: .7px #000;
  white-space: nowrap;
}
.panel p.roomy { margin-bottom: 187px; }
.status {
  position: absolute;
  left: 0;
  bottom: 0;
  width: 418px;
  height: 42px;
  padding-left: 10px;
  line-height: 41px;
  font-size: 24px;
  letter-spacing: -.12px;
  color: #3c4043;
  background: #dee0e3;
  border: 1px solid #bcbec1;
  border-width: 1px 1px 0 0;
  border-top-right-radius: 8px;
  white-space: nowrap;
}

/* dock */
.dock {
  width: 3424px;
  height: 120px;
  margin: 8px 0 0 80px;
  padding: 17px 4px 0;
  display: flex;
  border: 2px solid rgba(255, 255, 255, .22);
  border-radius: 36px;
  background: linear-gradient(90deg, #607ea6 0, #7280b2 30%, #7b7eb2 52%, #877cb0 72%, #947aae 85%, #a276a3 100%);
}
.app { width: 97.770px; height: 72px; display: flex; justify-content: center; position: relative; }
.app > svg { width: 72px; height: 72px; filter: drop-shadow(0 2px 2px rgba(0, 0, 0, .25)); }
.app.on::after {
  content: "";
  position: absolute;
  left: calc(50% - 5px);
  top: 89px;
  width: 8px;
  height: 8px;
  border-radius: 50%;
  background: #06062e;
}
.badge {
  position: absolute;
  left: calc(50% + 13px);
  top: -9px;
  width: 34px;
  height: 34px;
  border-radius: 50%;
  background: #e35244;
  color: #fff;
  font: 400 20px/34px Inter, sans-serif;
  text-align: center;
  box-shadow: 0 1px 2px rgba(0, 0, 0, .4);
}
.device { background: #dcdae0; display: grid; place-items: center; }
.device i { width: 12px; height: 21px; border: 2px solid #222; border-radius: 3px; background: #b9b9be; }
.rule { width: 44px; height: 88px; margin-top: -3px; background: linear-gradient(#5b4a80, #5b4a80) 50% 0 / 2px 100% no-repeat; }
.dock text { text-anchor: middle; font-family: Inter, sans-serif; }
.dock .route { font-size: 11px; font-weight: 700; fill: #fff; }
.dock .cal-month { font-size: 13px; font-weight: 600; fill: #fff; }
.dock .cal-day { font-size: 42px; font-weight: 300; fill: #222; }
.dock .tv { font-size: 29px; font-weight: 500; fill: #fff; }
.dock .quote { font: 700 56px "Liberation Serif", serif; fill: #eba53f; text-anchor: start; }
.dock .office { font-size: 20px; font-weight: 700; fill: #fff; }
.dock .zip { font-size: 13px; fill: #777; }
```
